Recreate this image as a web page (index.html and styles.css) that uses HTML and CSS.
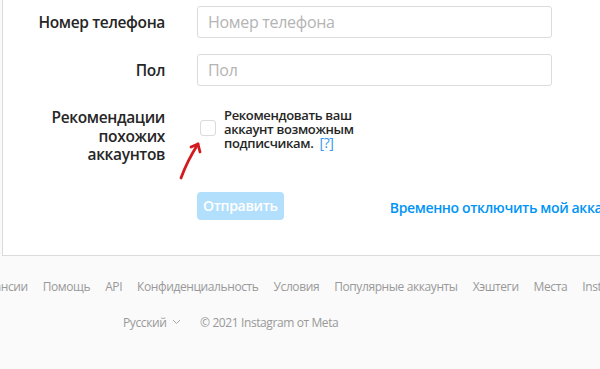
FILE: index.html
```html
<!DOCTYPE html>
<html lang="ru">
<head>
    <meta charset="UTF-8">
    <meta name="viewport" content="width=device-width, initial-scale=1.0">
    <title>Редактировать профиль • Instagram</title>
    <link rel="stylesheet" href="styles.css">
</head>
<body>
    <main class="card">
        <form class="edit-form">
            <div class="row">
                <label class="aside" for="phone">Номер телефона</label>
                <input class="field" type="text" id="phone" placeholder="Номер телефона">
            </div>
            <div class="row">
                <label class="aside" for="gender">Пол</label>
                <input class="field" type="text" id="gender" placeholder="Пол">
            </div>
            <div class="row row-check">
                <label class="aside aside-multi" for="similar">Рекомендации похожих аккаунтов</label>
                <div class="check-wrap">
                    <input class="check" type="checkbox" id="similar">
                    <span class="check-text">Рекомендовать ваш аккаунт возможным подписчикам. <a href="#" class="help">[?]</a></span>
                </div>
                <!-- стрелка поверх скриншота -->
                <svg class="arrow" width="36" height="46" viewBox="0 0 36 46">
                    <path d="M10 39 C 14 28, 20 16, 27 5" fill="none" stroke="#d31b1f" stroke-width="2.8" stroke-linecap="round"/>
                    <path d="M20 8 L27 5 L29 13" fill="none" stroke="#d31b1f" stroke-width="2.8" stroke-linecap="round" stroke-linejoin="round"/>
                </svg>
            </div>
            <div class="row row-submit">
                <span class="aside"></span>
                <div class="submit-wrap">
                    <button type="submit" class="submit" disabled>Отправить</button>
                    <a href="#" class="disable-link">Временно отключить мой аккаунт</a>
                </div>
            </div>
        </form>
    </main>

    <footer>
        <nav class="links">
            <a href="#">Вакансии</a>
            <a href="#">Помощь</a>
            <a href="#">API</a>
            <a href="#">Конфиденциальность</a>
            <a href="#">Условия</a>
            <a href="#">Популярные аккаунты</a>
            <a href="#">Хэштеги</a>
            <a href="#">Места</a>
            <a href="#">Instagram Lite</a>
        </nav>
        <div class="bottom">
            <span class="lang">Русский
                <svg width="9" height="6" viewBox="0 0 9 6"><path d="M1 1 L4.5 4.5 L8 1" fill="none" stroke="#a8a8a8" stroke-width="1"/></svg>
            </span>
            <span>© 2021 Instagram от Meta</span>
        </div>
    </footer>
</body>
</html>
```

FILE: styles.css
```css
body { margin: 0; background: #fafafa; font-family: "Open Sans", "Noto Sans", sans-serif; color: #262626; overflow: hidden; }

.card { margin-left: 2px; width: 760px; background: #fff; border: 1px solid #dbdbdb; border-top: 0; padding: 6px 0 35px; }
.edit-form { display: flex; flex-direction: column; }
.row { display: grid; grid-template-columns: 194px 355px; align-items: center; margin-bottom: 16px; position: relative; }
.aside { padding-right: 32px; text-align: right; font-size: 15.5px; font-weight: 600; line-height: 18px; letter-spacing: -0.35px; }
.field { box-sizing: border-box; height: 32px; border: 1px solid #dbdbdb; border-radius: 3px; padding: 0 10px; font-family: inherit; font-size: 16px; letter-spacing: -0.3px; color: #262626; background: #fff; }
.field::placeholder { color: #b4b4b4; }

.row-check { margin-top: 6px; align-items: start; }
.aside-multi { line-height: 18.5px; padding-left: 40px; }
.check-wrap { display: flex; align-items: center; }
.check { appearance: none; width: 16px; height: 16px; margin: -2px 8px 0 3px; border: 1px solid #dbdbdb; border-radius: 3px; background: #fff; flex: none; }
.check-text { width: 145px; font-size: 13px; font-weight: 600; line-height: 14px; letter-spacing: -0.35px; }
.help { color: #3897f0; text-decoration: none; font-weight: 400; font-size: 14px; margin-left: 3px; }
.arrow { position: absolute; left: 168px; top: 31px; }

.row-submit { margin: 12px 0 0; }
.submit-wrap { display: flex; align-items: center; white-space: nowrap; }
.submit { width: 90px; height: 28px; border: 0; border-radius: 4px; background: #b2dffc; color: #fff; font-family: inherit; font-size: 14px; font-weight: 600; letter-spacing: -0.3px; }
.disable-link { margin-left: 106px; margin-top: 4px; color: #0095f6; font-size: 14px; font-weight: 600; letter-spacing: -0.35px; text-decoration: none; }

footer { padding-top: 23px; font-size: 12px; line-height: 16px; color: #999; letter-spacing: -0.4px; }
.links { display: flex; gap: 15px; margin-left: -25px; white-space: nowrap; }
.links a { color: #999; text-decoration: none; }
.bottom { display: flex; gap: 19px; padding: 20px 0 0 123px; }
.lang svg { margin-left: 3px; vertical-align: 2px; }
```
